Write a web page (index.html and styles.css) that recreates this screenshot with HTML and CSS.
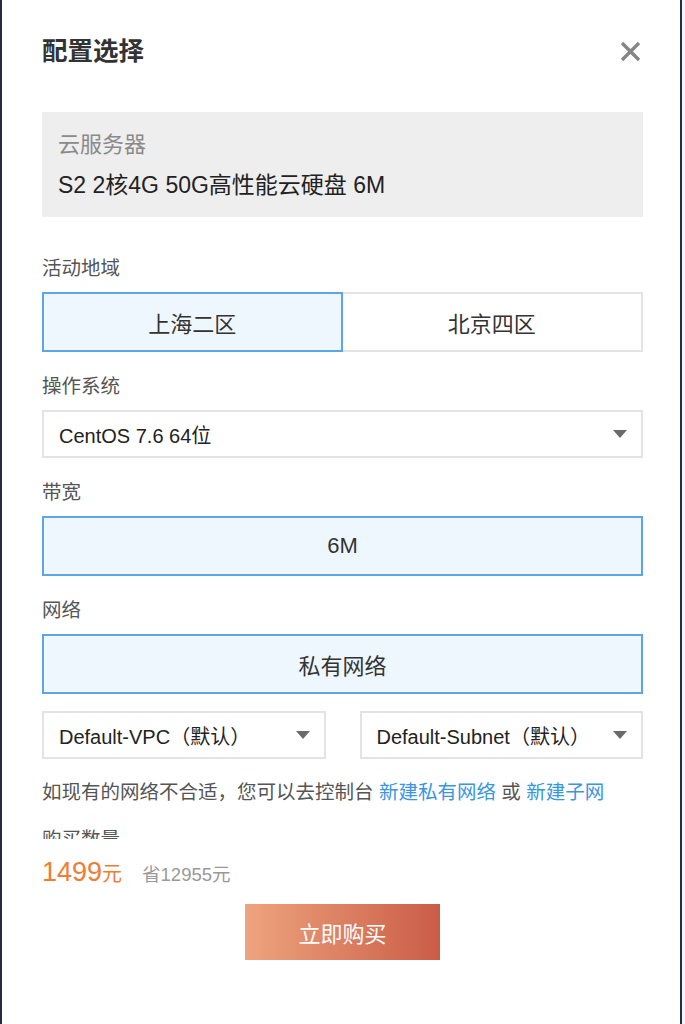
FILE: index.html
```html
<!DOCTYPE html>
<html lang="zh-CN">
<head>
<meta charset="utf-8">
<title>配置选择</title>
<link rel="stylesheet" href="styles.css">
</head>
<body>
<div class="modal">
  <div class="scroll">
    <header class="head">
      <h1 class="title">配置选择</h1>
      <span class="close" aria-label="关闭">
        <svg width="21" height="21" viewBox="0 0 21 21"><path d="M2 2 L19 19 M19 2 L2 19" stroke="#858585" stroke-width="3.4" stroke-linecap="butt"/></svg>
      </span>
    </header>

    <div class="summary">
      <div class="sum-title">云服务器</div>
      <div class="sum-spec">S2 2核4G 50G高性能云硬盘 6M</div>
    </div>

    <section class="field first">
      <div class="label">活动地域</div>
      <div class="seg">
        <div class="opt on">上海二区</div>
        <div class="opt">北京四区</div>
      </div>
    </section>

    <section class="field">
      <div class="label">操作系统</div>
      <div class="select"><span>CentOS 7.6 64位</span><i class="caret"></i></div>
    </section>

    <section class="field">
      <div class="label">带宽</div>
      <div class="opt on">6M</div>
    </section>

    <section class="field">
      <div class="label">网络</div>
      <div class="opt on">私有网络</div>
      <div class="pair">
        <div class="select"><span>Default-VPC（默认）</span><i class="caret"></i></div>
        <div class="select"><span>Default-Subnet（默认）</span><i class="caret"></i></div>
      </div>
      <p class="note">如现有的网络不合适，您可以去控制台 <a class="link">新建私有网络</a> 或 <a class="link">新建子网</a></p>
    </section>

    <section class="field">
      <div class="label">购买数量</div>
    </section>
  </div>

  <footer class="foot">
    <div class="price">
      <span class="num">1499</span><span class="unit">元</span>
      <span class="save">省12955元</span>
    </div>
    <button class="buy">立即购买</button>
  </footer>
</div>
</body>
</html>
```

FILE: styles.css
```css
html, body {
  margin: 0;
  padding: 0;
}
body {
  background: #f4f4f4;
  font-family: "Liberation Sans", "Noto Sans CJK SC", sans-serif;
  color: #333;
}
.modal {
  width: 682px;
  height: 1024px;
  box-sizing: border-box;
  background: #fff;
  border-left: 2px solid #262b3f;
  border-right: 2px solid #262b3f;
  padding: 0 37px 0 40px;
  overflow: hidden;
}
.scroll {
  height: 839px;
  overflow: hidden;
}
.head {
  display: flex;
  justify-content: space-between;
  align-items: center;
  padding-top: 34px;
  height: 34px;
  margin-bottom: 44px;
}
.title {
  margin: 0;
  font-size: 25.5px;
  line-height: 34px;
  font-weight: bold;
  color: #333;
}
.close {
  display: flex;
  margin-right: 2px;
}
.summary {
  background: #eeeeee;
  padding: 18px 16px 17px;
}
.sum-title {
  font-size: 22px;
  line-height: 30px;
  color: #8a8a8a;
}
.sum-spec {
  margin-top: 10px;
  font-size: 23px;
  line-height: 30px;
  color: #222;
}
.field {
  margin-top: 21px;
}
.field.first {
  margin-top: 38px;
}
.label {
  font-size: 19.5px;
  line-height: 26px;
  color: #555;
  margin-bottom: 11px;
}
.seg {
  display: grid;
  grid-template-columns: 1fr 1fr;
}
.opt {
  height: 60px;
  box-sizing: border-box;
  display: flex;
  align-items: center;
  justify-content: center;
  border: 2px solid #e3e3e3;
  font-size: 22px;
  color: #333;
  background: #fff;
}
.seg .opt + .opt {
  border-left: 0;
}
.opt.on {
  border-color: #5ca6e6;
  background: #eff7fe;
}
.select {
  height: 48px;
  box-sizing: border-box;
  border: 2px solid #e3e3e3;
  display: flex;
  align-items: center;
  justify-content: space-between;
  padding: 0 14px 0 15px;
  font-size: 20px;
  color: #222;
}
.caret {
  width: 0;
  height: 0;
  border-left: 7px solid transparent;
  border-right: 7px solid transparent;
  border-top: 8px solid #6a6a6a;
}
.pair {
  margin-top: 17px;
  display: grid;
  grid-template-columns: 1fr 1fr;
  gap: 34px;
}
.note {
  margin: 20px 0 0;
  font-size: 19.5px;
  line-height: 26px;
  color: #555;
}
.link {
  color: #3a96e0;
}
.foot {
  padding-top: 13px;
}
.price {
  display: flex;
  align-items: baseline;
  height: 40px;
  line-height: 40px;
}
.num {
  font-size: 27px;
  color: #ef7d34;
}
.unit {
  font-size: 20px;
  color: #ef7d34;
}
.save {
  margin-left: 20px;
  font-size: 18.5px;
  color: #999;
}
.buy {
  display: block;
  margin: 12px auto 0;
  width: 195px;
  height: 56px;
  border: 0;
  background: linear-gradient(to right, #eea47e, #ca5c47);
  color: #fff;
  font-family: inherit;
  font-size: 22px;
  padding: 0;
}
```
